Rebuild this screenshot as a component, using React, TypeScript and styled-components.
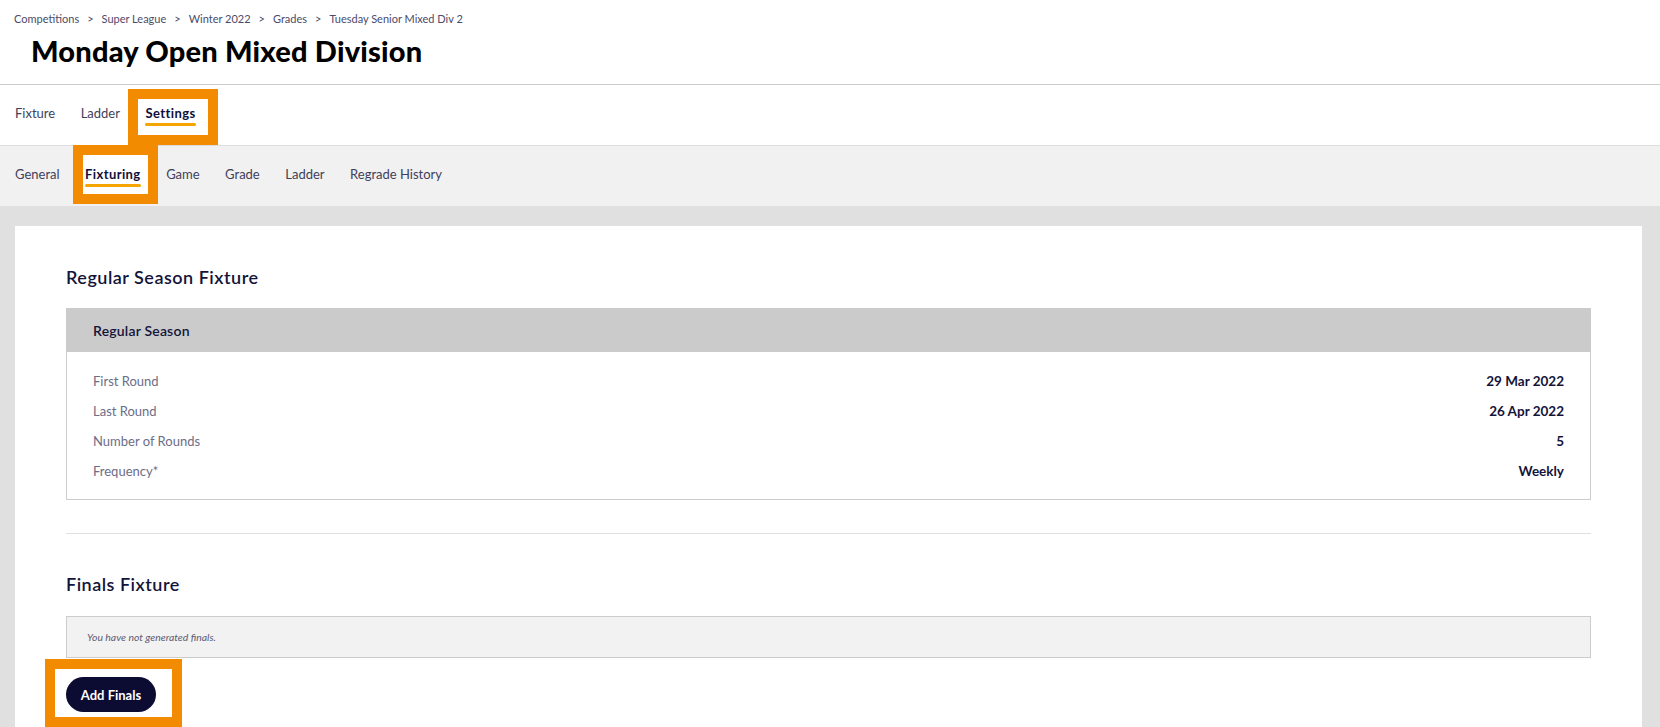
import React from "react";
import styled, { createGlobalStyle } from "styled-components";

const GlobalStyle = createGlobalStyle`
  html, body { margin: 0; padding: 0; background: #ffffff; }
  body { font-family: Lato, "Noto Sans", sans-serif; color: #14143a; }
  * { box-sizing: border-box; }
`;

const ORANGE = "#f28b00";

const Page = styled.div`
  width: 1660px;
  min-height: 727px;
  display: flex;
  flex-direction: column;
  background: #e0e0e0;
`;

const Header = styled.header`
  background: #ffffff;
  height: 85px;
  border-bottom: 1px solid #cccccc;
  padding: 12px 14px 0;
  display: flex;
  flex-direction: column;
`;

const Breadcrumb = styled.nav`
  display: flex;
  align-items: center;
  gap: 8px;
  font-size: 11px;
  line-height: 14px;
  color: #4b4b6a;
`;

const Crumb = styled.span``;
const Sep = styled.span`
  color: #4b4b6a;
`;

const Title = styled.h1`
  margin: 8px 0 0 17px;
  font-size: 29px;
  line-height: 34px;
  font-weight: 900;
  color: #000000;
  letter-spacing: 0.2px;
`;

const TabBar = styled.div<{ $sub?: boolean }>`
  height: ${(p) => (p.$sub ? "60px" : "61px")};
  background: ${(p) => (p.$sub ? "#f1f1f1" : "#ffffff")};
  border-bottom: ${(p) => (p.$sub ? "none" : "1px solid #dddddd")};
  display: flex;
  align-items: flex-start;
  gap: 25.5px;
  padding: 19px 15px 0;
`;

const Tab = styled.div<{ $active?: boolean }>`
  position: relative;
  display: flex;
  flex-direction: column;
  align-items: stretch;
  font-size: 13px;
  line-height: 18px;
  font-weight: ${(p) => (p.$active ? 700 : 400)};
  letter-spacing: ${(p) => (p.$active ? "0.4px" : "0")};
  color: ${(p) => (p.$active ? "#10103a" : "#3f3f5a")};
  z-index: 1;
`;

const TabLabel = styled.span`
  position: relative;
  z-index: 2;
`;

const Underline = styled.span<{ $show?: boolean }>`
  position: relative;
  z-index: 2;
  height: 3px;
  margin-top: 1px;
  border-radius: 2px;
  background: ${(p) => (p.$show ? "#f5a500" : "transparent")};
`;

type Inset = { t: number; r: number; b: number; l: number };

const Frame = styled.span<{ $i: Inset }>`
  position: absolute;
  top: ${(p) => -p.$i.t}px;
  right: ${(p) => -p.$i.r}px;
  bottom: ${(p) => -p.$i.b}px;
  left: ${(p) => -p.$i.l}px;
  border: 10px solid ${ORANGE};
  background: #ffffff;
  z-index: 1;
  pointer-events: none;
`;

const Main = styled.main`
  flex: 1;
  padding: 20px 18px 0 15px;
  display: flex;
`;

const Card = styled.section`
  flex: 1;
  background: #ffffff;
  padding: 40px 51px 0 51px;
  display: flex;
  flex-direction: column;
`;

const SectionTitle = styled.h2`
  margin: 0;
  font-size: 18px;
  line-height: 22px;
  font-weight: 600;
  color: #14143a;
  letter-spacing: 0.5px;
`;

const Table = styled.div`
  margin-top: 20px;
  border: 1px solid #cccccc;
  display: flex;
  flex-direction: column;
`;

const TableHead = styled.div`
  height: 44px;
  background: #cbcbcb;
  display: flex;
  align-items: center;
  margin: -1px -1px 0;
  padding: 0 26px 0 27px;
  font-size: 14px;
  font-weight: 600;
  letter-spacing: 0.2px;
  color: #14143a;
`;

const TableBody = styled.div`
  padding: 14px 26px 13px 26px;
  display: flex;
  flex-direction: column;
`;

const Row = styled.div`
  display: flex;
  justify-content: space-between;
  align-items: center;
  height: 30px;
  font-size: 13px;
`;

const Label = styled.span`
  color: #6d6d87;
`;

const Value = styled.span`
  color: #14143a;
  font-weight: 700;
  font-size: 13.5px;
`;

const Divider = styled.hr`
  margin: 33px 0 0;
  border: none;
  border-top: 1px solid #e0e0e0;
`;

const FinalsTitle = styled(SectionTitle)`
  margin-top: 39px;
`;

const Notice = styled.div`
  margin-top: 21px;
  height: 42px;
  background: #f2f2f2;
  border: 1px solid #cccccc;
  display: flex;
  align-items: center;
  padding-left: 20px;
  font-size: 10.4px;
  font-style: italic;
  color: #5b5b75;
`;

const ButtonRow = styled.div`
  margin-top: 19px;
  display: flex;
`;

const ButtonWrap = styled.div`
  position: relative;
  display: flex;
`;

const PrimaryButton = styled.button`
  position: relative;
  z-index: 2;
  height: 35px;
  width: 90px;
  border: none;
  border-radius: 18px;
  background: #0c0c33;
  color: #ffffff;
  font-family: Lato, "Noto Sans", sans-serif;
  font-size: 13px;
  font-weight: 700;
  cursor: pointer;
  padding: 0;
`;

const mainTabs = ["Fixture", "Ladder", "Settings"];
const subTabs = ["General", "Fixturing", "Game", "Grade", "Ladder", "Regrade History"];

const rows = [
  ["First Round", "29 Mar 2022"],
  ["Last Round", "26 Apr 2022"],
  ["Number of Rounds", "5"],
  ["Frequency*", "Weekly"],
];

const crumbs = ["Competitions", "Super League", "Winter 2022", "Grades", "Tuesday Senior Mixed Div 2"];

export default function App() {
  return (
    <>
      <GlobalStyle />
      <Page>
        <Header>
          <Breadcrumb>
            {crumbs.map((c, i) => (
              <React.Fragment key={c}>
                {i > 0 && <Sep>&gt;</Sep>}
                <Crumb>{c}</Crumb>
              </React.Fragment>
            ))}
          </Breadcrumb>
          <Title>Monday Open Mixed Division</Title>
        </Header>

        <TabBar>
          {mainTabs.map((t) => {
            const active = t === "Settings";
            return (
              <Tab key={t} $active={active}>
                {active && <Frame $i={{ t: 15, r: 22, b: 19, l: 17 }} />}
                <TabLabel>{t}</TabLabel>
                <Underline $show={active} />
              </Tab>
            );
          })}
        </TabBar>

        <TabBar $sub>
          {subTabs.map((t) => {
            const active = t === "Fixturing";
            return (
              <Tab key={t} $active={active}>
                {active && <Frame $i={{ t: 20, r: 17, b: 17, l: 12 }} />}
                <TabLabel>{t}</TabLabel>
                <Underline $show={active} />
              </Tab>
            );
          })}
        </TabBar>

        <Main>
          <Card>
            <SectionTitle>Regular Season Fixture</SectionTitle>
            <Table>
              <TableHead>Regular Season</TableHead>
              <TableBody>
                {rows.map(([l, v]) => (
                  <Row key={l}>
                    <Label>{l}</Label>
                    <Value>{v}</Value>
                  </Row>
                ))}
              </TableBody>
            </Table>
            <Divider />
            <FinalsTitle>Finals Fixture</FinalsTitle>
            <Notice>You have not generated finals.</Notice>
            <ButtonRow>
              <ButtonWrap>
                <Frame $i={{ t: 18, r: 26, b: 15, l: 21 }} />
                <PrimaryButton>Add Finals</PrimaryButton>
              </ButtonWrap>
            </ButtonRow>
          </Card>
        </Main>
      </Page>
    </>
  );
}
